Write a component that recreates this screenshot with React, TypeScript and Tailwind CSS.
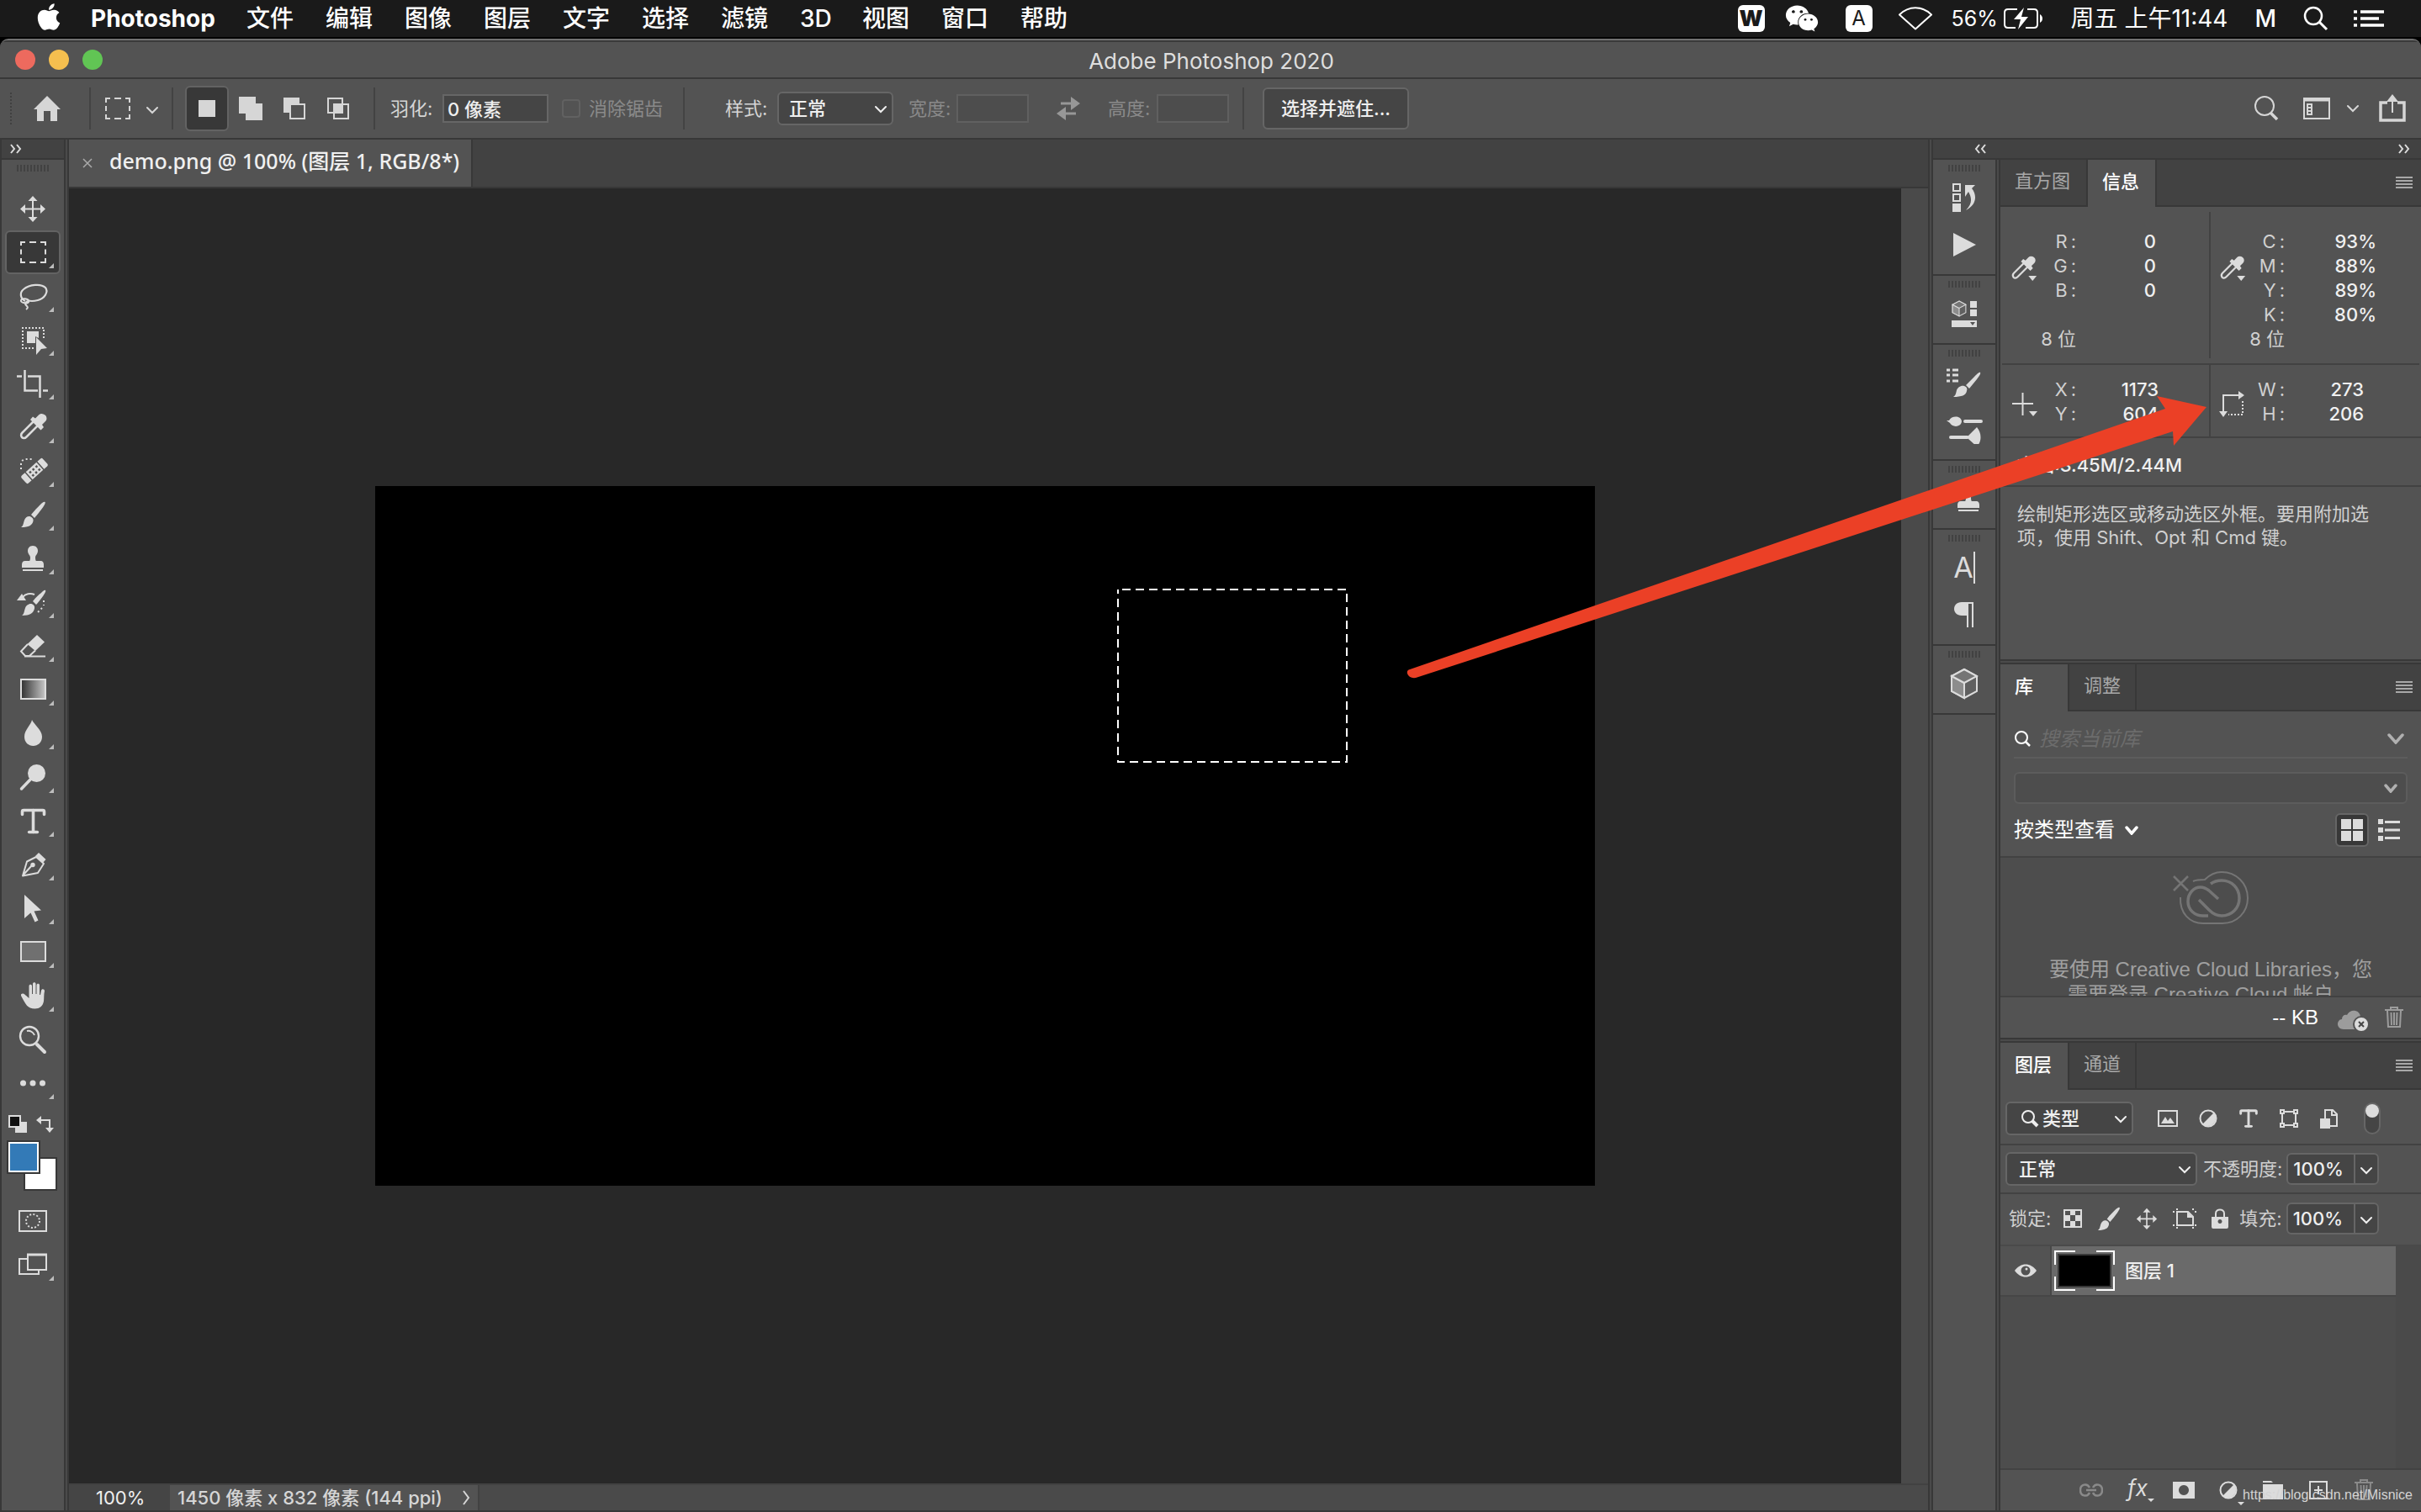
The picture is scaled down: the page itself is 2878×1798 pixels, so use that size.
import React, { useState } from 'react';
import { FaApple, FaWeixin } from 'react-icons/fa';
import { Type } from 'lucide-react';

interface IconProps {
  w?: number;
  h?: number;
  box?: string;
  className?: string;
  children: React.ReactNode;
}

const Icon: React.FC<IconProps> = ({ w = 44, h = 44, box, className = '', children }) => (
  <svg
    width={w}
    height={h}
    viewBox={box ?? `0 0 ${w} ${h}`}
    fill="none"
    stroke="currentColor"
    strokeWidth="2"
    className={`shrink-0 ${className}`}
    aria-hidden="true"
  >
    {children}
  </svg>
);

const fill = { fill: 'currentColor', stroke: 'none' };

const Chevron: React.FC<{ w?: number; h?: number; bold?: boolean; className?: string }> = ({ w = 14, h = 10, bold, className }) => (
  <Icon w={w} h={h} className={className}>
    <path d={`M${bold ? 2 : 1} 2L${w / 2} ${h - 2}L${w - (bold ? 2 : 1)} 2`} strokeWidth={bold ? 3.5 : 2} strokeLinecap="round" />
  </Icon>
);

const DoubleArrow: React.FC<{ left?: boolean }> = ({ left }) => (
  <Icon w={16} h={12} className={left ? 'rotate-180' : ''}>
    <path d="M2 1l4 5-4 5M9 1l4 5-4 5" />
  </Icon>
);

const Grip = () => (
  <div className="flex h-2 gap-[2px]">
    {Array.from({ length: 10 }).map((_, i) => (
      <span key={i} className="w-[2px] bg-[#424242]" />
    ))}
  </div>
);

const Separator: React.FC<{ className?: string }> = ({ className = '' }) => (
  <span className={`h-[50px] w-[2px] shrink-0 bg-[#434343] ${className}`} />
);

/* ---------- shared drawings ---------- */

const MoveShape = () => (
  <>
    <path d="M22 10v25M9 22.500h26" />
    <path d="M22 7l5.500 6h-11zM22 38l5.500-6h-11zM7 22.500l6-5.500v11zM37 22.500l-6-5.500v11z" {...fill} />
  </>
);

const BrushShape = () => (
  <>
    <path d="M36.500 7c1 1-1 4-3 7-3 4-6 8-9.500 12l-4-4c4-5 8-9 11-12 2-2 4.500-4 5.500-3z" {...fill} />
    <path d="M18.500 24c3 1 4.500 3 4 5.500-1 5-5 7.500-14.500 7.500 3-2 2.500-4.500 4-8.500 1-3 3.500-5 6.500-4.500z" {...fill} />
  </>
);

const StampShape = () => (
  <>
    <path d="M22 7c4 0 6 3 6 6 0 4-3 5-3 8 0 2 .5 4 1 4h5c3 0 4 2 4 4.500V33H9v-3.500C9 27 10 25 13 25h5c.5 0 1-2 1-4 0-3-3-4-3-8 0-3 2-6 6-6z" {...fill} />
    <path d="M10 36h24" />
  </>
);

const EyedropperShape = () => (
  <>
    <path d="M23 15L9.500 28.500c-2 2-1.500 4-.5 5.500 1.500 1.500 3.500 1.500 5.500-.5L28 20" strokeWidth="2.500" />
    <path d="M19 13l3-3.500 3 2 4-4c2-2 5-2 7.500 0s2.500 5.500.5 7.500l-4 4 2 3-3.500 3.500z" {...fill} />
  </>
);

const HalfCircle = () => (
  <Icon w={22} h={22}>
    <circle cx="11" cy="11" r="9.500" />
    <path d="M17.700 4.300A9.500 9.500 0 0 1 4.300 17.700z" {...fill} />
  </Icon>
);

const TrashIcon = () => (
  <Icon w={24} h={28}>
    <path d="M1 5h22M8 5V2h8v3M4 6l1 19h14l1-19M8.500 8l.5 15M12 8v15M15.500 8l-.5 15" />
  </Icon>
);

const CubeIcon: React.FC<{ w: number; h: number }> = ({ w, h }) => (
  <Icon w={w} h={h} box="0 0 34 38">
    <path d="M17 2l15 8v18l-15 8-15-8V10z" fill="#606060" />
    <path d="M2 10l15 8v18L2 28z" fill="#8d8d8d" />
    <path d="M2 10l15-8 15 8-15 8z" fill="#757575" />
  </Icon>
);

/* ---------- tools ---------- */

const tools: { name: string; more: boolean; icon: React.ReactNode }[] = [
  { name: '移动工具', more: false, icon: <MoveShape /> },
  {
    name: '矩形选框工具',
    more: true,
    icon: <path d="M8 14v-4h5M18 10h8M31 10h6v4M8 18.500v6M37 18.500v6M8 29v5h5M18 34h8M31 34h6v-5" />,
  },
  {
    name: '套索工具',
    more: true,
    icon: (
      <>
        <path d="M13 28C7 25 6 18 11 14 18 8 32 7 37 12c4 5-1 13-9 15-4 1-8 2-12 0" strokeWidth="2.200" />
        <path d="M17 28c0-3-8-4-9-1s6 4 8 3 1-1 1-2c-3 0-5 3-3 5s3 3 0 5" />
      </>
    ),
  },
  {
    name: '对象选择工具',
    more: true,
    icon: (
      <>
        <path d="M9 8h26v12M10 7v25h15" strokeDasharray="2 2" />
        <path d="M15 12h14v8l-4-2v8H15z" {...fill} />
        <path d="M26 19l13 13-7 1-6 7z" {...fill} />
      </>
    ),
  },
  { name: '裁剪工具', more: true, icon: <path d="M12.500 6v24.500H28M34 30.500h6M3 13.500h6M16 13.500h14.500V39" strokeWidth="2.500" /> },
  { name: '吸管工具', more: true, icon: <EyedropperShape /> },
  {
    name: '污点修复画笔工具',
    more: true,
    icon: (
      <>
        <path d="M8 20v-6c0-4 3-6 6-6h8" strokeDasharray="2 3" />
        <g transform="rotate(-42 24 22)" {...fill}>
          <path d="M14 16H9a2 2 0 0 0-2 2v8a2 2 0 0 0 2 2h5zM34 16h5a2 2 0 0 1 2 2v8a2 2 0 0 1-2 2h-5zM15.500 16h17v12h-17z" />
          <path d="M18 18.500h2.500v2.500H18zM23 18.500h2.500v2.500H23zM28 18.500h2.500v2.500H28zM18 23.500h2.500V26H18zM23 23.500h2.500V26H23zM28 23.500h2.500V26H28z" fill="#535353" />
        </g>
      </>
    ),
  },
  { name: '画笔工具', more: true, icon: <BrushShape /> },
  { name: '仿制图章工具', more: true, icon: <StampShape /> },
  {
    name: '历史记录画笔工具',
    more: true,
    icon: (
      <>
        <path d="M37 8c1 1-1 4-3 7-3 4-6 8-8 10l-4-4c4-5 7-8 10-10 2-2 4-4 5-3z" {...fill} />
        <path d="M20.500 24c3 1 4 3 3.500 5.500-1 5-5 8.500-15 8.500 3-2 2.500-5 4-9 1-3 4-5.500 7.500-5z" {...fill} />
        <path d="M10 16c3-4 9-5 14-3" />
        <path d="M35 20v6M33 29l-5 5" strokeDasharray="2 3" />
        <path d="M3 20l6-8 5 8z" {...fill} />
      </>
    ),
  },
  {
    name: '橡皮擦工具',
    more: true,
    icon: (
      <>
        <path d="M27 9l9 8.500L25 28l-9.500-8z" {...fill} />
        <path d="M16 20l-8 8.500 5 5.500h5l7-6.500M12 34.500h25" />
      </>
    ),
  },
  { name: '渐变工具', more: true, icon: <rect x="8" y="10" width="29" height="23" fill="url(#tool-gradient)" /> },
  { name: '模糊工具', more: true, icon: <path d="M21 6c2 5 12 12 12 20 0 7-5 11-10.500 11S12 33 12 26c0-8 8-14 9-20z" {...fill} /> },
  {
    name: '减淡工具',
    more: true,
    icon: (
      <>
        <circle cx="26.500" cy="17.500" r="10.500" {...fill} />
        <path d="M20 24L8.500 36" strokeWidth="3.500" strokeLinecap="round" />
      </>
    ),
  },
  { name: '横排文字工具', more: true, icon: <Type x={3} y={3} width={39} height={39} strokeWidth={2.2} /> },
  {
    name: '钢笔工具',
    more: true,
    icon: (
      <>
        <path d="M10 35.500l5-17L26 13l9 8-7 11zM11 34l10-11" strokeLinejoin="round" />
        <circle cx="22" cy="22.500" r="2.700" {...fill} />
        <path d="M25 12l4-4 8.500 8-4 4.500z" {...fill} />
      </>
    ),
  },
  { name: '路径选择工具', more: true, icon: <path d="M12 6l20 18.500-8.500 1 5 11-4 2-5-11-7.500 6.500z" {...fill} /> },
  { name: '矩形工具', more: true, icon: <rect x="8" y="10" width="29" height="23" fill="#707070" /> },
  {
    name: '抓手工具',
    more: true,
    icon: (
      <path
        d="M8.500 20c2-1.500 3.500 0 9 5V10.500c0-2.500 3.500-2.500 3.500 0V20h1V8c0-2.500 3.500-2.500 3.500 0v12h1V9.500c0-2.500 3.500-2.500 3.500 0V21h1l1-5c.5-2.500 4-2 4 .5-1 4-.5 8-1 12-1 6-5 9-10.500 9-9 0-11-5.500-16-14.500-.5-1-1-2.500 0-3z"
        {...fill}
      />
    ),
  },
  {
    name: '缩放工具',
    more: false,
    icon: (
      <>
        <circle cx="18" cy="18" r="11" strokeWidth="2.400" />
        <path d="M15 12c4-1 8 2 9 5" />
        <path d="M27 28l9 9" strokeWidth="4" strokeLinecap="round" />
      </>
    ),
  },
  {
    name: '编辑工具栏',
    more: true,
    icon: (
      <g {...fill}>
        <circle cx="10.500" cy="22" r="3.500" />
        <circle cx="22" cy="22" r="3.500" />
        <circle cx="33.500" cy="22" r="3.500" />
      </g>
    ),
  },
];

const MoreCorner = () => <path d="M47 35v6h-6z" fill="#bdbdbd" stroke="none" />;

const Toolbar = () => {
  const [active, setActive] = useState(1);

  return (
    <aside className="flex w-[74px] shrink-0 flex-col items-center bg-[#535353] text-[#dcdcdc]">
      <div className="flex h-6 w-full items-center border-b-2 border-[#383838] bg-[#424242] pl-[9px]">
        <DoubleArrow />
      </div>
      <div className="mt-[6px] mb-[18px]">
        <Grip />
      </div>
      {tools.map((tool, i) => (
        <button
          key={tool.name}
          type="button"
          aria-label={tool.name}
          onClick={() => setActive(i)}
          className={`flex h-[52px] w-[66px] items-center justify-center rounded-md border-2 ${
            i === active ? 'border-[#636363] bg-[#383838]' : 'border-transparent'
          }`}
        >
          <Icon className="overflow-visible">
            {tool.icon}
            {tool.more && <MoreCorner />}
          </Icon>
        </button>
      ))}

      <div className="mt-3 flex w-full justify-between px-2 pr-3">
        <button type="button" aria-label="默认前景色和背景色">
          <Icon w={22} h={22}>
            <rect x="8" y="8" width="14" height="13" {...fill} />
            <rect x="1" y="1" width="13" height="13" fill="#111" />
          </Icon>
        </button>
        <button type="button" aria-label="切换前景色和背景色">
          <Icon w={22} h={22}>
            <path d="M5 6h12v10" />
            <path d="M1 6l6-5v10zM17 21l-5-6h10z" {...fill} />
          </Icon>
        </button>
      </div>

      {/* Foreground and background swatches overlap each other */}
      <div className="relative mt-2 mr-[2px] h-[60px] w-[60px]">
        <button type="button" aria-label="背景色" className="absolute right-0 bottom-0 h-10 w-10 border-2 border-[#383838] bg-white" />
        <button type="button" aria-label="前景色" className="absolute top-0 left-0 h-10 w-10 border-2 border-[#383838] bg-white p-[2px]">
          <span className="block h-full w-full bg-[#337ab7]" />
        </button>
      </div>

      <button type="button" aria-label="快速蒙版" className="mt-[10px] flex h-[52px] items-center">
        <Icon>
          <rect x="6" y="10" width="32" height="24" />
          <circle cx="22" cy="22" r="8" strokeDasharray="2 2.200" />
        </Icon>
      </button>
      <button type="button" aria-label="屏幕模式" className="flex h-[52px] items-center">
        <Icon className="overflow-visible">
          <path d="M16 15H6v18h23v-5" />
          <path d="M16 9.500h22V28H16z" />
          <path d="M16 10.500h22" />
          <MoreCorner />
        </Icon>
      </button>
    </aside>
  );
};

/* ---------- top bars ---------- */

const menus = ['文件', '编辑', '图像', '图层', '文字', '选择', '滤镜', '3D', '视图', '窗口', '帮助'];

const MenuBar = () => (
  <header className="flex h-[46px] shrink-0 items-center border-b-2 border-black bg-[#1a1a1a] pr-11 pl-10 text-[28px] leading-none text-white">
    <button type="button" aria-label="Apple" className="mb-1">
      <FaApple size={36} />
    </button>
    <nav className="ml-8 flex items-center gap-[38px]">
      <button type="button" className="w-[147px] font-bold whitespace-nowrap">Photoshop</button>
      {menus.map((m) => (
        <button key={m} type="button" className={`font-medium whitespace-nowrap ${m === '3D' ? 'w-9' : 'w-14'}`}>{m}</button>
      ))}
    </nav>
    <div className="ml-auto flex items-center">
      <span className="flex h-8 w-8 items-center justify-center rounded-md bg-white text-[26px] font-black text-[#1a1a1a]">W</span>
      <FaWeixin size={40} className="ml-6" />
      <span className="ml-8 flex h-8 w-8 items-center justify-center rounded-md bg-white text-2xl text-[#1a1a1a]">A</span>
      <Icon w={42} h={30} className="ml-[30px]">
        <path d="M2 10.500C13-.5 29-.5 40 10.500L21 27.500z" strokeLinejoin="round" />
      </Icon>
      <span className="ml-[22px] w-[50px] text-[25px] whitespace-nowrap">56%</span>
      <Icon w={48} h={26} className="ml-[11px]">
        <path d="M17 2H6C3 2 2 3 2 6v14c0 3 1 4 4 4h9M29 2h8c3 0 4 1 4 4v14c0 3-1 4-4 4H27" />
        <path d="M25 0L13 14h8l-3 12 12-15h-8zM44 8c4 2 4 8 0 10z" {...fill} />
      </Icon>
      <span className="ml-[33px] whitespace-nowrap">周五 上午11:44</span>
      <span className="ml-8 font-medium">M</span>
      <Icon w={30} h={30} className="ml-8">
        <circle cx="12" cy="12" r="10" strokeWidth="2.500" />
        <path d="M19 19l9 9" strokeWidth="3" />
      </Icon>
      <Icon w={36} h={22} className="ml-[30px]">
        <path d="M0 3h4M8 3h28M0 11h4M8 11h22M0 19h4M8 19h28" strokeWidth="3.500" />
      </Icon>
    </div>
  </header>
);

const TitleBar = () => (
  <div className="grid h-[44px] shrink-0 grid-cols-3 items-center border-t-2 border-[#3a3a3a] bg-[#535353] pr-4 pl-[18px]">
    <div className="flex gap-4">
      <button type="button" aria-label="关闭" className="h-6 w-6 rounded-full bg-[#ed6a5e]" />
      <button type="button" aria-label="最小化" className="h-6 w-6 rounded-full bg-[#f5bf4f]" />
      <button type="button" aria-label="缩放" className="h-6 w-6 rounded-full bg-[#61c554]" />
    </div>
    <h1 className="pt-1 text-center text-[26px] leading-none text-[#dedede]">Adobe Photoshop 2020</h1>
  </div>
);

const selectionModes = [
  { name: '新选区', icon: <rect x="6" y="6" width="20" height="20" {...fill} /> },
  { name: '添加到选区', icon: <path d="M2 2h20v8h8v20H10v-8H2z" {...fill} /> },
  {
    name: '从选区减去',
    icon: (
      <>
        <path d="M3 3h19v7H10v11H3z" {...fill} />
        <rect x="11" y="11" width="17" height="17" />
      </>
    ),
  },
  {
    name: '与选区交叉',
    icon: (
      <>
        <rect x="4" y="4" width="17" height="17" />
        <rect x="11" y="11" width="17" height="17" />
        <path d="M11 11h10v10H11z" {...fill} />
      </>
    ),
  },
];

const OptionsBar = () => (
  <div className="flex h-[74px] shrink-0 items-center border-y-2 border-[#383838] bg-[#535353] pr-[18px] pl-3 text-[22px] leading-none whitespace-nowrap text-[#d6d6d6]">
    <span className="h-[38px] w-0 border-l-2 border-dotted border-[#404040]" />
    <button type="button" aria-label="主页" className="ml-[26px]">
      <Icon w={32} h={30}>
        <path d="M16 0l16 16h-4v14h-8V18h-8v12H4V16H0z" {...fill} />
      </Icon>
    </button>
    <Separator className="ml-[34px]" />
    <button type="button" aria-label="工具预设" className="ml-4 flex items-center gap-[18px]">
      <Icon w={32} h={28}>
        <path d="M2 7V2h5M12 2h8M25 2h5v5M2 11v6M30 11v6M2 21v5h5M12 26h8M25 26h5v-5" />
      </Icon>
      <Chevron className="mt-1" />
    </button>
    <Separator className="ml-4" />
    <div className="ml-[14px] flex">
      {selectionModes.map((mode, i) => (
        <button
          key={mode.name}
          type="button"
          aria-label={mode.name}
          className={`flex h-[54px] w-[52px] items-center justify-center rounded-md border-2 ${
            i === 0 ? 'border-[#636363] bg-[#383838]' : 'border-transparent'
          }`}
        >
          <Icon w={32} h={32}>{mode.icon}</Icon>
        </button>
      ))}
    </div>
    <Separator className="ml-4" />
    <label htmlFor="feather" className="ml-[18px] w-[62px]">羽化:</label>
    <input id="feather" defaultValue="0 像素" className="h-[34px] w-[126px] border-2 border-[#666] bg-[#454545] px-1 pb-[2px] font-medium text-[#efefef]" />
    <input id="antialias" type="checkbox" disabled className="ml-4 h-[22px] w-[22px] appearance-none rounded border-2 border-[#616161]" />
    <label htmlFor="antialias" className="ml-[10px] w-[88px] text-[#8a8a8a]">消除锯齿</label>
    <Separator className="ml-6" />
    <label htmlFor="style" className="ml-12 w-[62px]">样式:</label>
    <SelectBox id="style" options={['正常', '固定比例', '固定大小']} className="h-10 w-[138px] pl-3" />
    <label htmlFor="opt-width" className="ml-[18px] w-[57px] text-[#8a8a8a]">宽度:</label>
    <input id="opt-width" disabled className="h-[34px] w-[86px] border-2 border-[#606060] bg-[#4d4d4d]" />
    <button type="button" aria-label="高度和宽度互换" className="ml-8 text-[#979797]">
      <Icon w={30} h={28}>
        <path d="M6 8h14M10 20h14" strokeWidth="3" />
        <path d="M18 0l11 8-11 8zM12 12L1 20l11 8z" {...fill} />
      </Icon>
    </button>
    <label htmlFor="opt-height" className="ml-8 w-[58px] text-[#8a8a8a]">高度:</label>
    <input id="opt-height" disabled className="h-[34px] w-[86px] border-2 border-[#606060] bg-[#4d4d4d]" />
    <Separator className="ml-4" />
    <button type="button" className="ml-[22px] h-[50px] w-[174px] rounded-md border-2 border-[#666] bg-[#454545] font-medium text-[#efefef]">
      选择并遮住...
    </button>
    <div className="ml-auto flex items-center">
      <button type="button" aria-label="搜索">
        <Icon w={30} h={30}>
          <circle cx="12" cy="12" r="11" />
          <path d="M19 20l8 8" strokeWidth="3.500" />
        </Icon>
      </button>
      <button type="button" aria-label="选择工作区" className="ml-7 flex items-center gap-5">
        <Icon w={32} h={28}>
          <rect x="1" y="2" width="30" height="24" />
          <path d="M0 3.500h32" strokeWidth="4" />
          <path d="M5 9h5v12H5zM5 13h5M5 17h5" />
        </Icon>
        <Chevron />
      </button>
      <button type="button" aria-label="共享" className="ml-6">
        <Icon w={32} h={34}>
          <path d="M10 10H2v21h28V10h-8" strokeWidth="3.500" />
          <path d="M16 6v16" />
          <path d="M16 0l7 9H9z" {...fill} />
        </Icon>
      </button>
    </div>
  </div>
);

interface SelectBoxProps {
  id: string;
  options: string[];
  className: string;
  icon?: React.ReactNode;
}

const SelectBox: React.FC<SelectBoxProps> = ({ id, options, className, icon }) => (
  <div className={`relative flex shrink-0 items-center rounded-md border-2 border-[#666] bg-[#454545] text-[#efefef] ${className}`}>
    {icon}
    <select id={id} aria-label={id} className="h-full w-full appearance-none bg-transparent text-[22px] leading-none font-medium">
      {options.map((o) => (
        <option key={o}>{o}</option>
      ))}
    </select>
    <Chevron className="pointer-events-none absolute top-1/2 right-[6px] -mt-1" />
  </div>
);

/* ---------- document ---------- */

const DocumentArea = () => (
  <main className="flex min-w-0 flex-1 flex-col">
    <div className="flex h-[58px] shrink-0 border-b-2 border-[#383838] bg-[#424242]">
      <div className="flex w-[480px] items-center border-r-2 border-[#383838] bg-[#535353] pl-4 font-['Noto_Sans','Noto_Sans_CJK_SC',sans-serif] text-[25px] leading-none font-medium text-[#f0f0f0]">
        <button type="button" aria-label="关闭文档" className="text-[#aaa]">
          <Icon w={12} h={12}>
            <path d="M1 1l10 10M11 1L1 11" strokeWidth="1.500" />
          </Icon>
        </button>
        <span className="ml-5 pb-[6px] whitespace-nowrap">demo.png @ 100% (图层 1, RGB/8*)</span>
      </div>
    </div>
    <div className="flex min-h-0 flex-1">
      <div className="flex min-w-0 flex-1 items-center justify-center overflow-hidden bg-[#282828]">
        <div className="relative h-[832px] w-[1450px] shrink-0 bg-black">
          <svg className="absolute top-[122px] left-[882px]" width="275" height="207" fill="none" stroke="#fff" strokeWidth="2">
            <rect x="1" y="1" width="272" height="205" strokeDasharray="10 6" strokeDashoffset="-5" />
          </svg>
        </div>
      </div>
      <div className="w-8 shrink-0 bg-[#4a4a4a]" />
    </div>
    <footer className="flex h-8 shrink-0 border-t-2 border-[#424242] bg-[#4a4a4a] text-[22px] leading-[30px] whitespace-nowrap">
      <input aria-label="缩放比例" defaultValue="100%" className="w-[120px] bg-[#454545] pl-8 text-[#efefef]" />
      <button type="button" className="flex w-[368px] items-center justify-between border-r-2 border-[#424242] bg-[#535353] pr-2 pl-[9px] text-[#d6d6d6]">
        <span className="font-medium">1450 像素 x 832 像素 (144 ppi)</span>
        <Icon w={10} h={20}>
          <path d="M1 2l6 8-6 8" />
        </Icon>
      </button>
    </footer>
  </main>
);

/* ---------- collapsed panel dock ---------- */

const dockGroups: { name: string; icon: React.ReactNode }[][] = [
  [
    {
      name: '历史记录',
      icon: (
        <Icon w={30} h={36}>
          <path d="M2 2h8v8H2zM2 14h8v8H2z" />
          <path d="M1 25h10v10H1zM16 3h12l-4 4c7 9 5 20-7 26 8-8 7-15 3-22l-4 6z" {...fill} />
        </Icon>
      ),
    },
    {
      name: '动作',
      icon: (
        <Icon w={28} h={28}>
          <path d="M1 0l27 14L1 28z" {...fill} />
        </Icon>
      ),
    },
  ],
  [
    {
      name: '属性',
      icon: (
        <div className="flex flex-col gap-1">
          <div className="flex gap-1">
            <CubeIcon w={18} h={20} />
            <Icon w={8} h={20}>
              <path d="M0 1h8v8H0zM0 11h8v8H0z" {...fill} />
            </Icon>
          </div>
          <Icon w={30} h={8}>
            <path d="M0 0h30v8H0zM22 2l3 4 3-4z" fillRule="evenodd" {...fill} />
          </Icon>
        </div>
      ),
    },
  ],
  [
    {
      name: '画笔设置',
      icon: (
        <Icon w={42} h={36}>
          <path d="M0 3h4M7 3h7M0 9h4M7 9h7M0 16h4M7 16h7" strokeWidth="3" />
          <path d="M40 6c1 1-1 4-4 8l-9 11-4-4 10-10c3-3 6-6 7-5zM21 22c3 1 4 3 3 6-1 5-6 7-16 7 3-2 3-4 4-8 1-3 5-6 9-5z" {...fill} />
        </Icon>
      ),
    },
    {
      name: '画笔',
      icon: (
        <Icon w={44} h={34}>
          <path d="M23 7h19M6 26h20" strokeWidth="4" strokeLinecap="round" />
          <path d="M1 6h3c3-6 14-6 15 1-1 8-12 7-14 2zM27 24l10-10c6 7 6 17 0 23L27 28z" {...fill} />
        </Icon>
      ),
    },
  ],
  [
    {
      name: '仿制源',
      icon: (
        <Icon box="-5 0 44 44">
          <StampShape />
        </Icon>
      ),
    },
  ],
  [
    {
      name: '字符',
      icon: (
        <span className="flex items-center text-[34px] leading-none">
          A<span className="h-[38px] w-[2px] bg-[#dcdcdc]" />
        </span>
      ),
    },
    {
      name: '段落',
      icon: (
        <Icon w={24} h={30}>
          <path d="M9 1h14M22 1v29M16 1v29" />
          <path d="M17 0h-8C3 0 0 4 0 8s3 8 9 8h8z" {...fill} />
        </Icon>
      ),
    },
  ],
  [{ name: '3D', icon: <CubeIcon w={34} h={38} /> }],
];

const Dock = () => (
  <div className="flex w-[74px] shrink-0 flex-col bg-[#535353] text-[#dcdcdc]">
    {dockGroups.map((group, i) => (
      <div key={i} className="flex flex-col items-center border-b-2 border-[#383838] pt-[6px] pb-[7px]">
        <Grip />
        <div className="mt-[3px] flex flex-col items-center">
          {group.map((item) => (
            <button key={item.name} type="button" aria-label={item.name} className="flex h-14 w-14 items-center justify-center">
              {item.icon}
            </button>
          ))}
        </div>
      </div>
    ))}
  </div>
);

/* ---------- panels ---------- */

interface PanelTabsProps {
  tabs: { label: string; className: string }[];
  active: number;
}

const PanelTabs: React.FC<PanelTabsProps> = ({ tabs, active }) => (
  <div className="flex h-14 shrink-0 bg-[#424242] text-[22px] leading-none">
    {tabs.map((tab, i) => (
      <button
        key={tab.label}
        type="button"
        className={`border-r-2 border-[#383838] pb-1 pl-[17px] text-left whitespace-nowrap ${tab.className} ${
          i === active ? 'bg-[#535353] font-medium text-white' : 'border-b-2 text-[#a8a8a8]'
        }`}
      >
        {tab.label}
      </button>
    ))}
    <div className="flex flex-1 items-center justify-end border-b-2 border-[#383838] pr-[10px]">
      <button type="button" aria-label="面板菜单" className="text-[#a8a8a8]">
        <Icon w={20} h={14}>
          <path d="M0 1h20M0 5h20M0 9h20M0 13h20" />
        </Icon>
      </button>
    </div>
  </div>
);

interface ReadoutProps {
  icon: React.ReactNode;
  rows: [string, string][];
  depth?: string;
  iconClass: string;
  className: string;
  valueClass: string;
}

const Readout: React.FC<ReadoutProps> = ({ icon, rows, depth, iconClass, className, valueClass }) => (
  <div className={`flex text-[22px] leading-[29px] ${className}`}>
    <span className={`w-8 text-[#dcdcdc] ${iconClass}`}>{icon}</span>
    <dl>
      {rows.map(([label, value]) => (
        <div key={label} className="flex">
          <dt className="flex w-[46px] justify-end gap-1 text-[#d0d0d0]">
            <span>{label}</span>
            <span>{label && ':'}</span>
          </dt>
          <dd className={`h-[29px] text-right font-medium text-[#f0f0f0] ${valueClass}`}>{value}</dd>
        </div>
      ))}
      {depth && <div className="flex w-[46px] justify-end whitespace-nowrap text-[#d0d0d0]">{depth}</div>}
    </dl>
  </div>
);

const SmallEyedropper = () => (
  <Icon w={32} h={32} box="5 4 36 36">
    <EyedropperShape />
    <path d="M29 32h11l-5.500 7z" {...fill} />
  </Icon>
);

const InfoPanel = () => (
  <section className="flex h-[594px] shrink-0 flex-col bg-[#535353]">
    <PanelTabs
      active={1}
      tabs={[
        { label: '直方图', className: 'w-[104px]' },
        { label: '信息', className: 'w-[82px]' },
      ]}
    />
    <div className="mx-[2px] flex h-[188px] shrink-0 border-b-2 border-[#424242]">
      <div className="my-[6px] w-1/2 border-r-2 border-[#424242] pt-[21px]">
        <Readout
          icon={<SmallEyedropper />}
          iconClass="mt-[30px]"
          className="pl-[10px]"
          valueClass="w-[95px]"
          rows={[['R', '0'], ['G', '0'], ['B', '0'], ['', '']]}
          depth="8 位"
        />
      </div>
      <div className="w-1/2 pt-[27px]">
        <Readout
          icon={<SmallEyedropper />}
          iconClass="mt-[30px]"
          className="pl-[10px]"
          valueClass="w-[109px]"
          rows={[['C', '93%'], ['M', '88%'], ['Y', '89%'], ['K', '80%']]}
          depth="8 位"
        />
      </div>
    </div>
    <div className="flex h-[87px] shrink-0 border-b-2 border-[#424242] px-[2px]">
      <div className="w-1/2 border-r-2 border-[#424242] pt-[15px]">
        <Readout
          icon={
            <Icon w={32} h={32}>
              <path d="M2 15h25M14.500 2v27" />
              <path d="M22 24h10l-5 6z" {...fill} />
            </Icon>
          }
          iconClass="mt-4"
          className="pl-[10px]"
          valueClass="w-[98px]"
          rows={[['X', '1173'], ['Y', '604']]}
        />
      </div>
      <div className="w-1/2 pt-[15px]">
        <Readout
          icon={
            <Icon w={32} h={32}>
              <path d="M5 26V5h20" />
              <path d="M23 0l7 5-7 5zM0 24l5 7 5-7z" {...fill} />
              <path d="M28 12v16H11" strokeDasharray="2 2" />
            </Icon>
          }
          iconClass="mt-4"
          className="pl-[10px]"
          valueClass="w-[94px]"
          rows={[['W', '273'], ['H', '206']]}
        />
      </div>
    </div>
    <p className="h-[58px] shrink-0 border-b-2 border-[#424242] pl-5 text-[22px] leading-[64px] font-medium text-[#f0f0f0]">文档:3.45M/2.44M</p>
    <p className="px-5 pt-[18px] pr-8 text-[22px] leading-7 text-[#d0d0d0]">
      绘制矩形选区或移动选区外框。要用附加选项，使用 Shift、Opt 和 Cmd 键。
    </p>
  </section>
);

const LibraryPanel = () => (
  <section className="flex h-[444px] shrink-0 flex-col bg-[#535353]">
    <PanelTabs
      active={0}
      tabs={[
        { label: '库', className: 'w-[82px]' },
        { label: '调整', className: 'w-20' },
      ]}
    />
    <div className="px-4 text-2xl leading-none">
      <div className="flex h-14 items-center border-b-2 border-[#5c5c5c] pt-[10px] pr-1">
        <Icon w={20} h={20} className="text-white">
          <circle cx="9" cy="9" r="7" />
          <path d="M14 14l5 5" strokeWidth="2.500" />
        </Icon>
        <input aria-label="搜索当前库" placeholder="搜索当前库" className="ml-[10px] h-8 min-w-0 flex-1 bg-transparent italic outline-none placeholder:text-[#6c6c6c]" />
        <Chevron w={20} h={13} bold className="text-[#b0b0b0]" />
      </div>
      <div className="relative mt-4 h-[38px] rounded-md border-2 border-[#5c5c5c] bg-[#4d4d4d]">
        <select aria-label="库列表" disabled className="h-full w-full appearance-none" />
        <Chevron w={16} h={11} bold className="pointer-events-none absolute top-3 right-[10px] text-[#b0b0b0]" />
      </div>
      <div className="flex h-[62px] items-center">
        <button type="button" className="flex items-center gap-3 whitespace-nowrap text-white">
          按类型查看
          <Chevron w={16} h={11} bold />
        </button>
        <button type="button" aria-label="网格视图" className="ml-auto flex h-10 w-10 items-center justify-center rounded-md border-2 border-[#666] bg-[#383838] text-[#dcdcdc]">
          <Icon w={26} h={26}>
            <path d="M0 0h12v12H0zM14 0h12v12H14zM0 14h12v12H0zM14 14h12v12H14z" {...fill} />
          </Icon>
        </button>
        <button type="button" aria-label="列表视图" className="mr-[9px] ml-[11px] text-[#dcdcdc]">
          <Icon w={26} h={26}>
            <path d="M0 0h6v6H0zM0 10h6v6H0zM0 20h6v6H0zM8 2h18v3H8zM8 11.500h18v3H8zM8 21h18v3H8z" {...fill} />
          </Icon>
        </button>
      </div>
    </div>
    <div className="flex min-h-0 flex-1 flex-col items-center overflow-hidden border-y-2 border-[#424242] bg-[#4d4d4d] pt-4">
      <Icon w={90} h={64} className="text-[#757575]">
        <path d="M1 6l17 17M18 6L1 23" strokeWidth="2.500" />
        <path d="M24 12c4-2 8-2 14-2C44 4 51 1 58 1c17 0 31 13 31 31 0 17-13 30-30 30H36C20 62 8 50 9 31" />
        <path d="M45 15c4-3 8-4 13-4 12 0 21 9 21 21s-9 21-21 21c-6 0-11-3-15-7L31 34M54 33L43 23c-4-3-7-4-10-4-8 0-15 7-15 17s8 17 18 17h6" strokeWidth="3.500" />
      </Icon>
      <p className="mt-[38px] w-[400px] text-center font-['Liberation_Sans','Noto_Sans_CJK_SC',sans-serif] text-2xl leading-[30px] text-[#a0a0a0]">
        要使用 Creative Cloud Libraries，您<br />需要登录 Creative Cloud 帐户。
      </p>
    </div>
    <div className="flex h-12 shrink-0 items-center justify-end pr-5 font-['Liberation_Sans',sans-serif] text-2xl leading-none text-white">
      -- KB
      <button type="button" aria-label="同步状态" className="ml-[22px] pt-2">
        <Icon w={38} h={26} className="text-[#9c9c9c]">
          <path d="M8 23c-4 0-7-3-7-6s2-6 5-6c0-4 3-6 6-5 2-4 6-6 10-5s6 4 6 8c4 0 6 3 6 6v8z" {...fill} />
          <circle cx="29" cy="17" r="9" fill="#dcdcdc" stroke="#535353" />
          <path d="M26 14l6 6M32 14l-6 6" stroke="#454545" />
        </Icon>
      </button>
      <button type="button" aria-label="删除库项目" className="ml-[18px] text-[#9c9c9c]">
        <TrashIcon />
      </button>
    </div>
  </section>
);

const filterIcons = [
  {
    name: '像素图层',
    icon: (
      <Icon w={24} h={22}>
        <rect x="1" y="2" width="22" height="18" />
        <path d="M4 17l5-8 3 5 3-4 5 7z" {...fill} />
      </Icon>
    ),
  },
  { name: '调整图层', icon: <HalfCircle /> },
  { name: '文字图层', icon: <Type size={28} strokeWidth={2.5} /> },
  {
    name: '形状图层',
    icon: (
      <Icon w={24} h={24}>
        <path d="M4 4h16v16H4z" />
        <path d="M2 2h4v4H2zM18 2h4v4h-4zM2 18h4v4H2zM18 18h4v4h-4z" fill="#535353" />
      </Icon>
    ),
  },
  {
    name: '智能对象',
    icon: (
      <Icon w={22} h={24}>
        <path d="M6 12V2h9l5 5v14h-8M14 2v6h6" />
        <path d="M0 12h12v12H0z" {...fill} />
      </Icon>
    ),
  },
];

const lockIcons = [
  {
    name: '锁定透明像素',
    icon: (
      <Icon w={22} h={22}>
        <rect x="1" y="1" width="20" height="20" />
        <path d="M8 2h6v5H8zM2 7h6v7H2zM14 7h6v7h-6zM8 14h6v6H8z" {...fill} />
      </Icon>
    ),
  },
  {
    name: '锁定图像像素',
    icon: (
      <Icon w={28} h={28} box="7 6 31 31">
        <BrushShape />
      </Icon>
    ),
  },
  {
    name: '锁定位置',
    icon: (
      <Icon w={26} h={26} box="6 6 32 32">
        <MoveShape />
      </Icon>
    ),
  },
  {
    name: '防止在画板内外自动嵌套',
    icon: (
      <Icon w={28} h={24}>
        <path d="M5 4h13l6 6v10H5z" />
        <path d="M17 4l7 7h-7z" {...fill} />
        <path d="M0 4h2M5 0v2M24 0v2M26 4h2M0 20h2M26 20h2M5 22v2M24 22v2" />
      </Icon>
    ),
  },
  {
    name: '锁定全部',
    icon: (
      <Icon w={20} h={24}>
        <path d="M5 10V6c0-6 10-6 10 0v4" />
        <path d="M0 10h20v12a2 2 0 0 1-2 2H2a2 2 0 0 1-2-2zM10 13a2.500 2.500 0 1 0 .01 0z" fillRule="evenodd" {...fill} />
      </Icon>
    ),
  },
];

const PercentField: React.FC<{ id: string; label: string }> = ({ id, label }) => (
  <div className="flex items-center">
    <label htmlFor={id} className="mr-[5px] whitespace-nowrap text-[#d0d0d0]">{label}</label>
    <div className="flex h-[38px] w-[110px] rounded-md border-2 border-[#666] bg-[#454545] text-[#efefef]">
      <input id={id} defaultValue="100%" className="w-[78px] bg-transparent pl-[6px] font-medium" />
      <button type="button" aria-label={`${label}滑块`} className="flex flex-1 items-center justify-center border-l-2 border-[#666]">
        <Chevron className="mt-1" />
      </button>
    </div>
  </div>
);

const LayersPanel = () => (
  <section className="flex min-h-0 flex-1 flex-col bg-[#535353] text-[22px] leading-none text-[#dcdcdc]">
    <PanelTabs
      active={0}
      tabs={[
        { label: '图层', className: 'w-[82px]' },
        { label: '通道', className: 'w-20' },
      ]}
    />
    <div className="flex h-[66px] shrink-0 items-center border-b-2 border-[#424242] pt-1 pl-[6px]">
      <SelectBox
        id="图层过滤"
        options={['类型', '名称', '效果']}
        className="h-10 w-[152px] pl-4"
        icon={
          <Icon w={22} h={22} className="mr-1">
            <circle cx="9" cy="9" r="7" />
            <path d="M14 14l6 6" strokeWidth="4" />
          </Icon>
        }
      />
      <div className="ml-[17px] flex items-center">
        {filterIcons.map((f) => (
          <button key={f.name} type="button" aria-label={f.name} className="flex w-12 justify-center">{f.icon}</button>
        ))}
      </div>
      <button type="button" aria-label="打开或关闭图层过滤" className="ml-[17px] flex h-[38px] w-5 items-start rounded-full border-2 border-[#666] bg-[#454545]">
        <span className="block h-4 w-4 rounded-full bg-[#dcdcdc]" />
      </button>
    </div>
    <div className="flex h-[58px] shrink-0 items-center gap-[7px] border-b-2 border-[#424242] pl-[6px]">
      <SelectBox id="混合模式" options={['正常', '溶解', '变暗']} className="h-10 w-[228px] pl-[14px]" />
      <PercentField id="opacity" label="不透明度:" />
    </div>
    <div className="flex h-[62px] shrink-0 items-center border-b-2 border-[#4a4a4a] pb-[2px] pl-[10px]">
      <span className="text-[#d0d0d0]">锁定:</span>
      <div className="mr-[13px] ml-[15px] flex items-center gap-[18px]">
        {lockIcons.map((l) => (
          <button key={l.name} type="button" aria-label={l.name}>{l.icon}</button>
        ))}
      </div>
      <PercentField id="fill-opacity" label="填充:" />
    </div>
    <div className="flex min-h-0 flex-1">
      <ul className="flex-1 bg-[#4d4d4d]">
        <li className="flex h-[60px] border-b-2 border-[#474747] bg-[#535353]">
          <button type="button" aria-label="指示图层可见性" className="flex w-[61px] items-center justify-center border-r-2 border-[#474747]">
            <Icon w={26} h={16}>
              <path d="M0 8C7-2 19-2 26 8 19 18 7 18 0 8z" {...fill} />
              <circle cx="13" cy="8" r="5.500" fill="#535353" stroke="none" />
              <circle cx="14" cy="6" r="1.500" {...fill} />
            </Icon>
          </button>
          <button type="button" className="flex flex-1 items-center gap-3 bg-[#6a6a6a] pl-[3px] font-medium text-[#f0f0f0]">
            <Icon w={72} h={48} className="text-white">
              <path d="M1 17V1h24M50 1h21v16M1 31v16h24M50 47h21V31" />
              <rect x="5" y="5" width="62" height="38" fill="#000" stroke="#383838" />
            </Icon>
            图层 1
          </button>
        </li>
      </ul>
      <div className="w-[30px] bg-[#4a4a4a]" />
    </div>
    <div className="flex h-[50px] shrink-0 items-center border-t-2 border-[#424242] pl-[94px]">
      <button type="button" aria-label="链接图层" className="text-[#8a8a8a]">
        <Icon w={28} h={16}>
          <path d="M12 5C9-1 1 1 1 8s8 9 11 3M16 5c3-6 11-4 11 3s-8 9-11 3M8 8h12" strokeWidth="2.500" />
        </Icon>
      </button>
      <button type="button" aria-label="图层样式" className="ml-[29px] flex items-end">
        <span className="pb-1 text-[26px] italic">fx</span>
        <Icon w={8} h={8}>
          <path d="M0 3h8L4 7z" {...fill} />
        </Icon>
      </button>
      <button type="button" aria-label="图层蒙版" className="ml-[22px]">
        <Icon w={26} h={20}>
          <path d="M0 0h26v20H0zM13 4a6 6 0 1 0 .01 0z" fillRule="evenodd" {...fill} />
        </Icon>
      </button>
      <button type="button" aria-label="新的填充或调整图层" className="ml-[29px] flex items-end">
        <HalfCircle />
        <Icon w={8} h={8} className="translate-y-2">
          <path d="M0 3h8L4 7z" {...fill} />
        </Icon>
      </button>
      <button type="button" aria-label="新建组" className="ml-[22px]">
        <Icon w={24} h={22}>
          <path d="M0 0h10l2 2H0zM0 4h24v18H0z" {...fill} />
        </Icon>
      </button>
      <button type="button" aria-label="新建图层" className="ml-[31px]">
        <Icon w={22} h={22}>
          <path d="M1 1h20v20H1zM11 6v10M6 11h10" />
        </Icon>
      </button>
      <button type="button" aria-label="删除图层" className="ml-[31px] text-[#8a8a8a]">
        <TrashIcon />
      </button>
    </div>
  </section>
);

/* ---------- gutters between docked areas ---------- */

const Gutter = () => <div className="w-[6px] shrink-0 border-x-2 border-[#383838] bg-[#4a4a4a]" />;
const PanelGap = () => <div className="h-[6px] shrink-0 border-y-2 border-[#383838] bg-[#4a4a4a]" />;

const App: React.FC = () => {
  return (
    <div className="relative flex h-screen w-full flex-col overflow-hidden bg-black font-['Inter','Noto_Sans_CJK_SC',sans-serif]">
      <svg width="0" height="0" className="absolute">
        <defs>
          <linearGradient id="tool-gradient">
            <stop offset="0" stopColor="#303030" />
            <stop offset="1" stopColor="#c8c8c8" />
          </linearGradient>
        </defs>
      </svg>

      <MenuBar />

      <div className="flex min-h-0 flex-1 flex-col overflow-hidden rounded-t-[10px] border-t-2 border-[#707070] bg-[#383838]">
        <TitleBar />
        <OptionsBar />
        <div className="flex min-h-0 flex-1 border-b-2 border-l-2 border-[#383838]">
          <Toolbar />
          <Gutter />
          <DocumentArea />
          <Gutter />
          <div className="flex w-[580px] shrink-0 flex-col">
            <div className="flex h-6 shrink-0 items-center justify-between border-b-2 border-[#383838] bg-[#424242] pr-3 pl-12 text-[#dcdcdc]">
              <DoubleArrow left />
              <DoubleArrow />
            </div>
            <div className="flex min-h-0 flex-1">
              <Dock />
              <Gutter />
              <div className="flex min-w-0 flex-1 flex-col">
                <InfoPanel />
                <PanelGap />
                <LibraryPanel />
                <PanelGap />
                <LayersPanel />
              </div>
            </div>
          </div>
        </div>
      </div>

      {/* Arrow from the selection to the W/H readout */}
      <svg className="pointer-events-none absolute inset-0 h-full w-full" viewBox="0 0 2878 1798" preserveAspectRatio="none">
        <path d="M1676 796L2574 486L2564 471L2623 484L2584 530L2583 513L1683 806Q1675 807 1673 801Q1672 797 1676 796z" fill="#eb4026" />
      </svg>
      <a href="https://blog.csdn.net/Misnice" className="absolute right-[10px] bottom-[10px] font-['Liberation_Sans',sans-serif] text-base leading-5 text-[#d4d4d4]">
        https://blog.csdn.net/Misnice
      </a>
    </div>
  );
};

export default App;
